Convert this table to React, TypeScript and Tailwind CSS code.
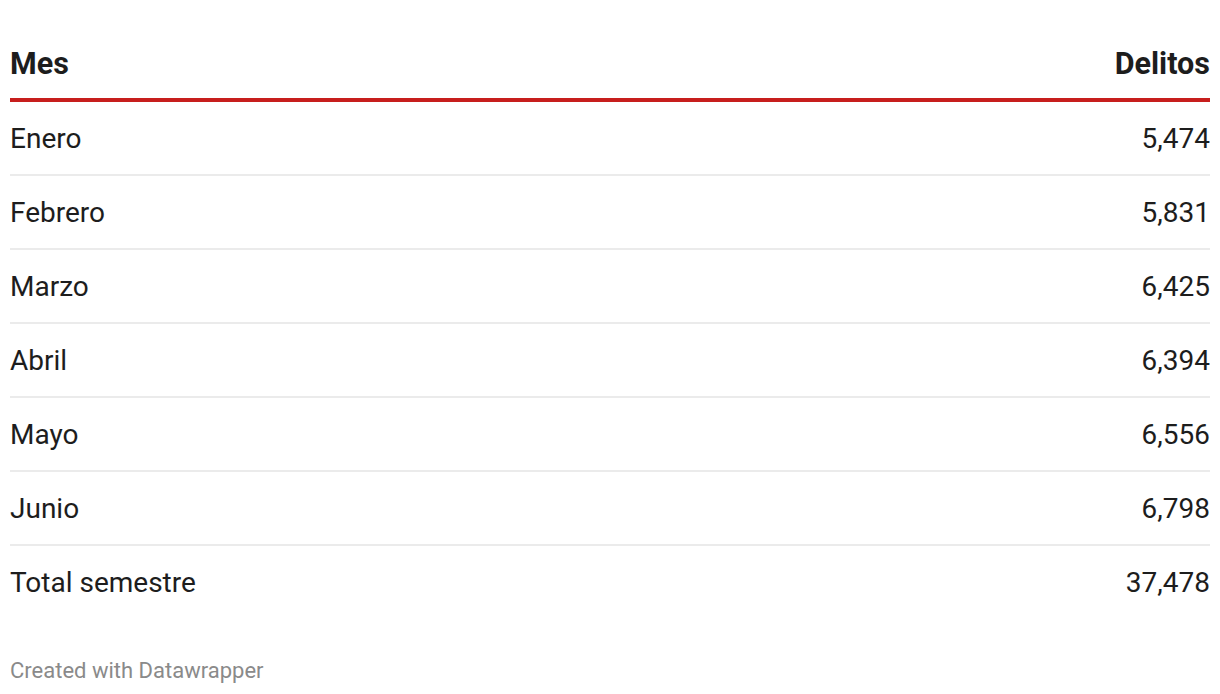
const rows = [
  { mes: "Enero", delitos: "5,474" },
  { mes: "Febrero", delitos: "5,831" },
  { mes: "Marzo", delitos: "6,425" },
  { mes: "Abril", delitos: "6,394" },
  { mes: "Mayo", delitos: "6,556" },
  { mes: "Junio", delitos: "6,798" },
  { mes: "Total semestre", delitos: "37,478" },
];

export default function App() {
  return (
    <div className="min-h-[694px] bg-white px-[10px] font-['Roboto',sans-serif] text-[#1d1d1d]">
      <div className="flex justify-between border-b-4 border-[#c71e1d] pt-[47px] pb-[17px] text-[30.5px] font-bold leading-[34px]">
        <span>Mes</span>
        <span>Delitos</span>
      </div>
      {rows.map((r, i) => (
        <div
          key={r.mes}
          className={
            "flex justify-between pt-[20px] pb-[18px] text-[28px] leading-[34px] " +
            (i < rows.length - 1 ? "border-b-2 border-[#ebebeb]" : "")
          }
        >
          <span>{r.mes}</span>
          <span className="tabular-nums">{r.delitos}</span>
        </div>
      ))}
      <div className="mt-[40px] text-[22px] leading-[26px] text-[#8a8a8a]">Created with Datawrapper</div>
    </div>
  );
}
